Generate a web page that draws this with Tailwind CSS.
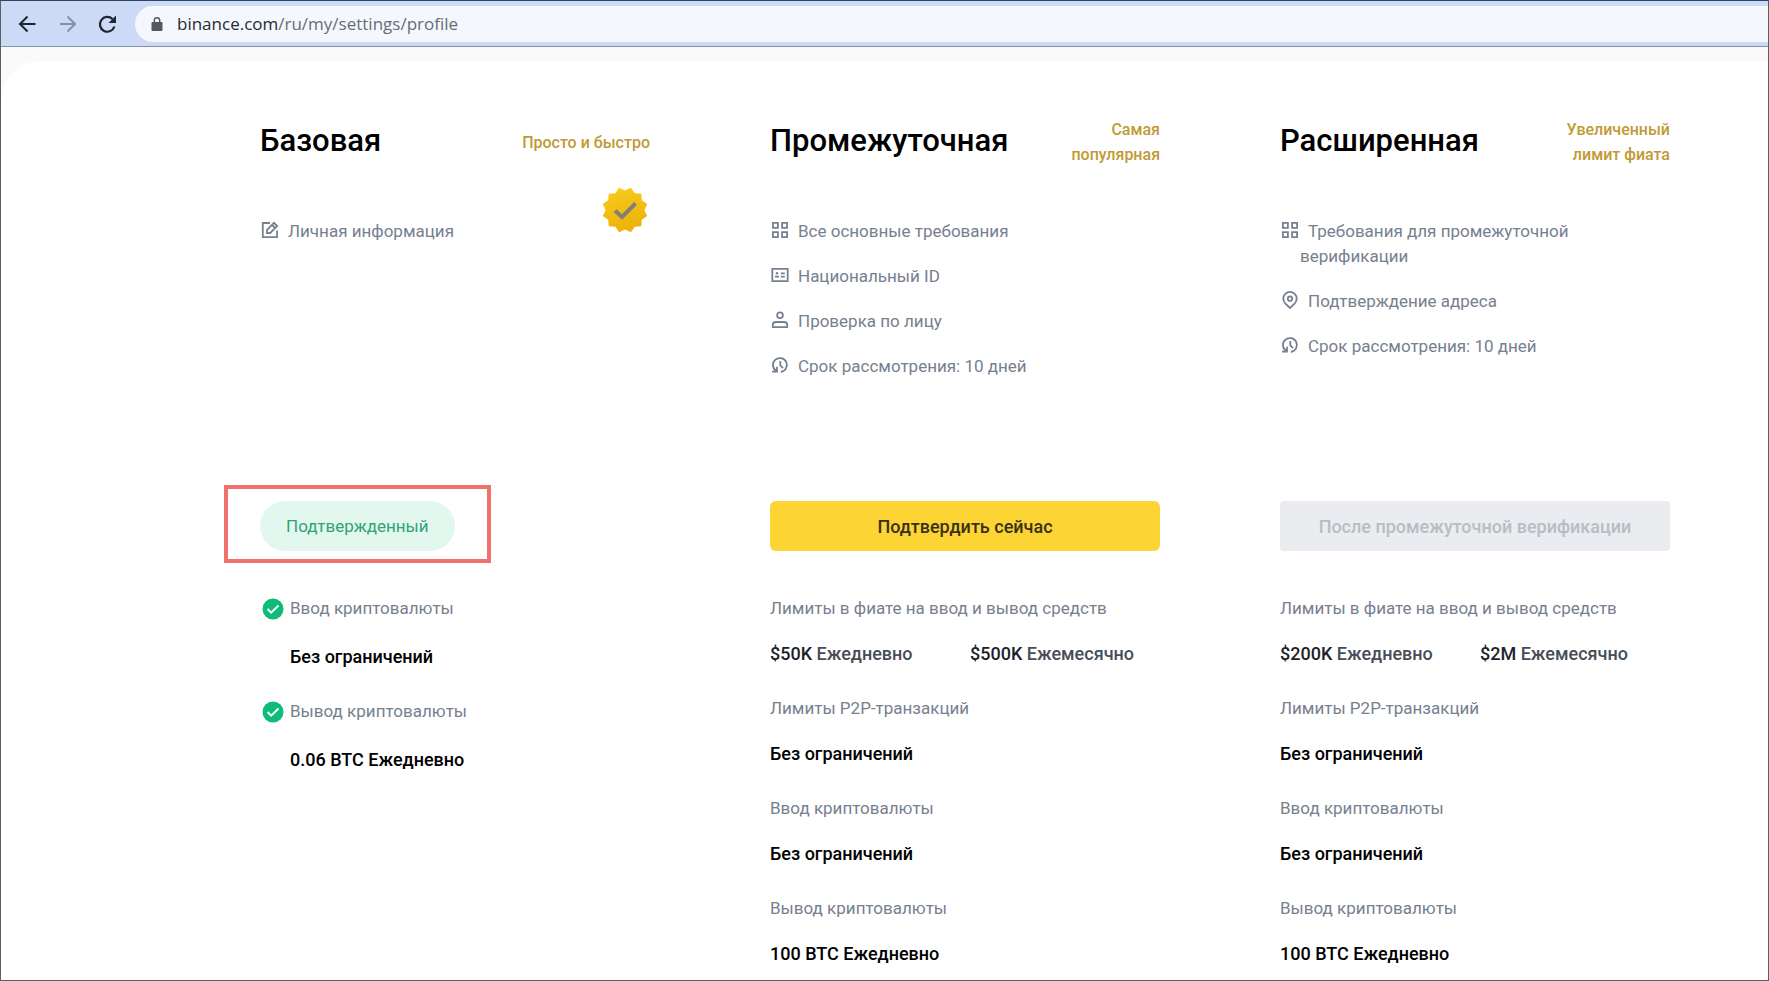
<!DOCTYPE html>
<html lang="ru">
<head>
<meta charset="utf-8">
<title>Профиль</title>
<script src="https://cdn.jsdelivr.net/npm/@tailwindcss/browser@4"></script>
</head>
<body class="min-h-screen flex flex-col border border-[#5b5d66] border-t-[#2f4268] bg-[#fafafa] font-['Roboto','Noto_Sans',sans-serif] text-[17px] leading-[25px] text-[#76808f] overflow-x-hidden">
<svg class="hidden" aria-hidden="true">
  <symbol id="grid" viewBox="0 0 20 20"><path fill="none" stroke="currentColor" stroke-width="1.8" d="M2.9 2.9h5v5h-5zM12.100 2.9h5v5h-5zM2.9 12.100h5v5h-5zM12.100 12.100h5v5h-5z"/></symbol>
  <symbol id="edit" viewBox="0 0 20 20"><path fill="none" stroke="currentColor" stroke-width="1.8" d="M10 3H2.8v14.200H17V10.500M7 13V9.800L14 2.800l3.200 3.200-7 7zM12 5l3.200 3.200"/></symbol>
  <symbol id="card" viewBox="0 0 20 20"><path fill="none" stroke="currentColor" stroke-width="1.8" d="M2.300 3.800h15.400v12.400H2.300zM10.800 8.300h4M10.800 11.700h4M5 11.700h4"/><circle cx="7" cy="8.200" r="1.200" fill="currentColor"/></symbol>
  <symbol id="person" viewBox="0 0 20 20"><path fill="none" stroke="currentColor" stroke-width="1.8" d="M2.800 17.200v-2.200a3 3 0 0 1 3-3h8.400a3 3 0 0 1 3 3v2.200z"/><circle cx="10" cy="5.300" r="2.900" fill="none" stroke="currentColor" stroke-width="1.8"/></symbol>
  <symbol id="clock" viewBox="0 0 20 20"><path fill="none" stroke="currentColor" stroke-width="1.8" d="M6.600 16.200A7 7 0 1 1 10.800 17M2 16.700h5v-5M10.300 6v4.500l2.700 2.700"/></symbol>
  <symbol id="pin" viewBox="0 0 20 20"><path fill="none" stroke="currentColor" stroke-width="1.8" d="M10 18l-4.800-4.700a6.700 6.700 0 1 1 9.600 0z"/><circle cx="10" cy="8.700" r="2.200" fill="none" stroke="currentColor" stroke-width="1.8"/></symbol>
  <symbol id="ok" viewBox="0 0 22 22"><circle cx="11" cy="11" r="10.500" fill="#0ebb79"/><path fill="none" stroke="#fff" stroke-width="2" d="M5.500 11l3.700 3.700 7.300-7.200"/></symbol>
</svg>

<header class="flex items-center h-[46px] bg-[#cddaf5] border-b border-[#8592ad] pl-4">
  <button type="button" aria-label="Назад" class="mr-5 text-[#1d2530]"><svg class="size-5" viewBox="0 0 20 20" fill="none" stroke="currentColor" stroke-width="2"><path d="M18.500 10H3M10.500 2.500L3 10l7.500 7.500"/></svg></button>
  <button type="button" aria-label="Вперёд" class="mr-5 text-[#8290ac]"><svg class="size-5" viewBox="0 0 20 20" fill="none" stroke="currentColor" stroke-width="2"><path d="M3 10h15M10.500 2.500L18 10l-7.500 7.500"/></svg></button>
  <button type="button" aria-label="Обновить" class="mr-[18px] text-[#1d2530]"><svg class="size-5" viewBox="0 0 20 20"><path fill="none" stroke="currentColor" stroke-width="2.200" d="M17.400 12.500A7.400 7.400 0 1 1 15.500 5"/><path fill="currentColor" d="M19 1.500V9h-7.500z"/></svg></button>
  <div class="flex flex-1 items-center h-9 rounded-l-full bg-[#f4f8fe] pl-4">
    <svg class="w-3 h-[14px] text-[#55585e]" viewBox="0 0 12 14"><path fill="currentColor" d="M1.500 5h9q1 0 1 1v7q0 1-1 1h-9q-1 0-1-1V6q0-1 1-1z"/><path fill="none" stroke="currentColor" stroke-width="1.400" d="M3.300 6V3.400a2.700 2.700 0 0 1 5.400 0V6"/></svg>
    <a href="#" class="ml-[14px] font-['Open_Sans','Noto_Sans',sans-serif] text-[17px] text-[#676c73]"><span class="text-[#262a30]">binance.com</span>/ru/my/settings/profile</a>
  </div>
</header>

<main class="flex-1 mt-[14px] rounded-tl-[40px] bg-white pl-[259px] pr-[98px] pt-14">
  <div class="grid grid-cols-3 gap-x-[120px]">

    <section class="relative">
      <div class="flex h-[50px] items-center justify-between">
        <h2 class="pb-0.5 text-[31px] leading-9 font-medium text-black">Базовая</h2>
        <p class="text-right text-[16px] font-medium text-[#c19a35]">Просто и быстро</p>
      </div>
      <svg class="absolute top-[70px] right-[2px] size-[46px]" viewBox="0 0 46 46" role="img" aria-label="Подтверждено"><defs><linearGradient id="gold" x1="0" y1="0" x2="0.300" y2="1"><stop offset="0" stop-color="#f9cc1d"/><stop offset="1" stop-color="#edb30b"/></linearGradient></defs><path id="seal" fill="url(#gold)"/><path fill="none" stroke="#808075" stroke-width="4" d="M13 23.500l7 6.500L33.500 16.500"/></svg>
      <ul class="mt-[52px] h-[282px] flex flex-col gap-5">
        <li class="pl-5 -indent-5"><svg class="inline size-5 mr-2 align-[-3px]"><use href="#edit"/></svg>Личная информация</li>
      </ul>
      <div class="relative w-fit">
        <span class="flex h-[50px] items-center rounded-full bg-[#e2f8ef] px-[26px] text-[#31a275]">Подтвержденный</span>
        <div class="absolute -top-4 -inset-x-9 -bottom-3 border-4 border-[#ef706c]"></div>
      </div>
      <dl class="mt-[45px] grid grid-cols-[24px_1fr] gap-x-1.5">
        <dt class="col-span-2 flex items-center gap-1.5"><svg class="size-[22px] ml-0.5 shrink-0"><use href="#ok"/></svg>Ввод криптовалюты</dt>
        <dd class="col-start-2 mt-[23px] mb-[30px] text-[18px] font-medium text-black">Без ограничений</dd>
        <dt class="col-span-2 flex items-center gap-1.5"><svg class="size-[22px] ml-0.5 shrink-0"><use href="#ok"/></svg>Вывод криптовалюты</dt>
        <dd class="col-start-2 mt-[23px] text-[18px] font-medium text-black">0.06 BTC Ежедневно</dd>
      </dl>
    </section>

    <section>
      <div class="flex h-[50px] items-center justify-between">
        <h2 class="pb-0.5 text-[31px] leading-9 font-medium text-black">Промежуточная</h2>
        <p class="text-right text-[16px] font-medium text-[#c19a35]">Самая<br>популярная</p>
      </div>
      <ul class="mt-[52px] h-[282px] flex flex-col gap-5">
        <li class="pl-5 -indent-5"><svg class="inline size-5 mr-2 align-[-3px]"><use href="#grid"/></svg>Все основные требования</li>
        <li class="pl-5 -indent-5"><svg class="inline size-5 mr-2 align-[-3px]"><use href="#card"/></svg>Национальный ID</li>
        <li class="pl-5 -indent-5"><svg class="inline size-5 mr-2 align-[-3px]"><use href="#person"/></svg>Проверка по лицу</li>
        <li class="pl-5 -indent-5"><svg class="inline size-5 mr-2 align-[-3px]"><use href="#clock"/></svg>Срок рассмотрения: 10 дней</li>
      </ul>
      <button type="button" class="h-[50px] w-full rounded-md bg-[#fcd535] text-[18px] font-medium text-[#3a3015]">Подтвердить сейчас</button>
      <dl class="mt-[45px]">
        <dt>Лимиты в фиате на ввод и вывод средств</dt>
        <dd class="mt-5 mb-[30px] grid grid-cols-[200px_1fr] text-[18px] font-medium text-[#474d57]"><span><b class="font-medium text-[#1e2329]">$50K</b> Ежедневно</span><span><b class="font-medium text-[#1e2329]">$500K</b> Ежемесячно</span></dd>
        <dt>Лимиты P2P-транзакций</dt>
        <dd class="mt-5 mb-[30px] text-[18px] font-medium text-black">Без ограничений</dd>
        <dt>Ввод криптовалюты</dt>
        <dd class="mt-5 mb-[30px] text-[18px] font-medium text-black">Без ограничений</dd>
        <dt>Вывод криптовалюты</dt>
        <dd class="mt-5 text-[18px] font-medium text-black">100 BTC Ежедневно</dd>
      </dl>
    </section>

    <section>
      <div class="flex h-[50px] items-center justify-between">
        <h2 class="pb-0.5 text-[31px] leading-9 font-medium text-black">Расширенная</h2>
        <p class="text-right text-[16px] font-medium text-[#c19a35]">Увеличенный<br>лимит фиата</p>
      </div>
      <ul class="mt-[52px] h-[282px] flex flex-col gap-5">
        <li class="pl-5 -indent-5"><svg class="inline size-5 mr-2 align-[-3px]"><use href="#grid"/></svg>Требования для промежуточной<br>верификации</li>
        <li class="pl-5 -indent-5"><svg class="inline size-5 mr-2 align-[-3px]"><use href="#pin"/></svg>Подтверждение адреса</li>
        <li class="pl-5 -indent-5"><svg class="inline size-5 mr-2 align-[-3px]"><use href="#clock"/></svg>Срок рассмотрения: 10 дней</li>
      </ul>
      <button type="button" disabled class="h-[50px] w-full rounded bg-[#eaecef] text-[18px] font-medium text-[#b7bdc6]">После промежуточной верификации</button>
      <dl class="mt-[45px]">
        <dt>Лимиты в фиате на ввод и вывод средств</dt>
        <dd class="mt-5 mb-[30px] grid grid-cols-[200px_1fr] text-[18px] font-medium text-[#474d57]"><span><b class="font-medium text-[#1e2329]">$200K</b> Ежедневно</span><span><b class="font-medium text-[#1e2329]">$2M</b> Ежемесячно</span></dd>
        <dt>Лимиты P2P-транзакций</dt>
        <dd class="mt-5 mb-[30px] text-[18px] font-medium text-black">Без ограничений</dd>
        <dt>Ввод криптовалюты</dt>
        <dd class="mt-5 mb-[30px] text-[18px] font-medium text-black">Без ограничений</dd>
        <dt>Вывод криптовалюты</dt>
        <dd class="mt-5 text-[18px] font-medium text-black">100 BTC Ежедневно</dd>
      </dl>
    </section>
  </div>
</main>
<script>
  // Twelve-toothed seal outline
  let d = "";
  const teeth = 12;
  for (let i = 0; i < teeth * 2; i++) {
    const r = i % 2 ? 23 : 19.4, a = Math.PI * i / teeth - Math.PI / 2;
    d += (i ? "L" : "M") + (23 + r * Math.cos(a)).toFixed(2) + " " + (23 + r * Math.sin(a)).toFixed(2);
  }
  document.getElementById("seal").setAttribute("d", d + "Z");
</script>
</body>
</html>
